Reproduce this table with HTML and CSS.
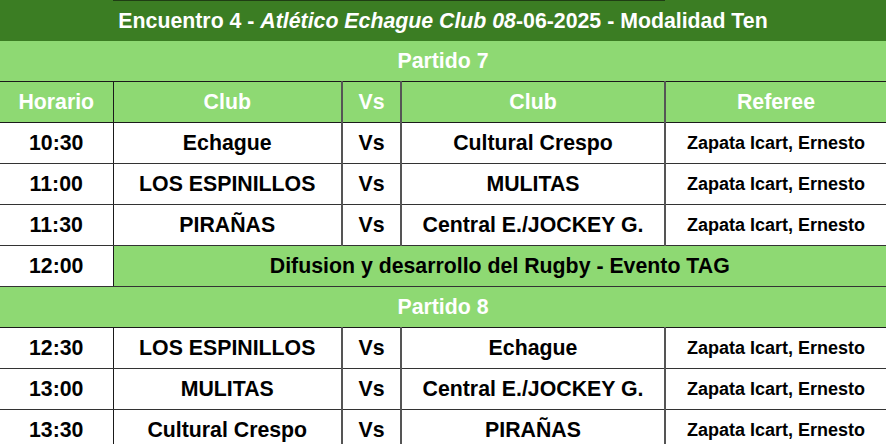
FILE: index.html
```html
<!DOCTYPE html>
<html lang="es">
<head>
<meta charset="utf-8">
<title>Encuentro 4 - Modalidad Ten</title>
<link rel="stylesheet" href="styles.css">
</head>
<body>
<table class="fixture">
  <colgroup>
    <col class="c-time">
    <col class="c-club1">
    <col class="c-vs">
    <col class="c-club2">
    <col class="c-ref">
  </colgroup>
  <tbody>
    <tr class="cut">
      <td class="cut-side"></td>
      <td class="cut-mid" colspan="3"></td>
      <td class="cut-side"></td>
    </tr>
    <tr class="title">
      <td colspan="5">Encuentro 4 - <i>Atlético Echague Club 08</i>-06-2025 - Modalidad Ten</td>
    </tr>
    <tr class="match">
      <td colspan="5">Partido 7</td>
    </tr>
    <tr class="head">
      <td>Horario</td>
      <td>Club</td>
      <td class="vs">Vs</td>
      <td>Club</td>
      <td class="ref">Referee</td>
    </tr>
    <tr class="game">
      <td>10:30</td>
      <td>Echague</td>
      <td class="vs">Vs</td>
      <td>Cultural Crespo</td>
      <td class="ref">Zapata Icart, Ernesto</td>
    </tr>
    <tr class="game">
      <td>11:00</td>
      <td>LOS ESPINILLOS</td>
      <td class="vs">Vs</td>
      <td>MULITAS</td>
      <td class="ref">Zapata Icart, Ernesto</td>
    </tr>
    <tr class="game">
      <td>11:30</td>
      <td>PIRAÑAS</td>
      <td class="vs">Vs</td>
      <td>Central E./JOCKEY G.</td>
      <td class="ref">Zapata Icart, Ernesto</td>
    </tr>
    <tr class="game event">
      <td>12:00</td>
      <td class="event-cell" colspan="4">Difusion y desarrollo del Rugby - Evento TAG</td>
    </tr>
    <tr class="match">
      <td colspan="5">Partido 8</td>
    </tr>
    <tr class="game">
      <td>12:30</td>
      <td>LOS ESPINILLOS</td>
      <td class="vs">Vs</td>
      <td>Echague</td>
      <td class="ref">Zapata Icart, Ernesto</td>
    </tr>
    <tr class="game">
      <td>13:00</td>
      <td>MULITAS</td>
      <td class="vs">Vs</td>
      <td>Central E./JOCKEY G.</td>
      <td class="ref">Zapata Icart, Ernesto</td>
    </tr>
    <tr class="game">
      <td>13:30</td>
      <td>Cultural Crespo</td>
      <td class="vs">Vs</td>
      <td>PIRAÑAS</td>
      <td class="ref">Zapata Icart, Ernesto</td>
    </tr>
  </tbody>
</table>
</body>
</html>
```

FILE: styles.css
```css
html, body {
  margin: 0;
  padding: 0;
  background: #ffffff;
  overflow: hidden;
}

.fixture {
  width: 886px;
  border-collapse: collapse;
  table-layout: fixed;
  font-family: "Liberation Sans", Arial, sans-serif;
  font-weight: bold;
  color: #000;
}

.c-time { width: 113px; }
.c-club1 { width: 229px; }
.c-vs { width: 59px; }
.c-club2 { width: 264px; }
.c-ref { width: 221px; }

.fixture td {
  padding: 0;
  text-align: center;
  white-space: nowrap;
  overflow: hidden;
}

.cut td {
  height: 1px;
  line-height: 1px;
  font-size: 1px;
}
.cut-side { background: #3b7d23; }
.cut-mid { background: #1f3d14; }

.title td {
  height: 40px;
  background: #3b7d23;
  color: #ffffff;
  font-size: 21.3px;
}
.title i { font-style: italic; }

.match td {
  height: 40px;
  background: #8ed973;
  color: #ffffff;
  font-size: 21.3px;
  border-bottom: 1px solid #1a1a1a;
}

.head td {
  height: 40px;
  background: #8ed973;
  color: #ffffff;
  font-size: 21.3px;
  border-bottom: 1px solid #1a1a1a;
  border-left: 1px solid #1a1a1a;
}

.game td {
  height: 40px;
  font-size: 21.3px;
  border-bottom: 1px solid #333;
  border-left: 1px solid #1a1a1a;
}

.head td:first-child,
.game td:first-child {
  border-left: none;
}

.head td.vs,
.game td.vs,
.head td.vs + td,
.game td.vs + td {
  border-left: 2px solid #555;
}

.head td.ref,
.game td.ref {
  border-left: 2px solid #555;
}

.game td.ref {
  font-size: 18px;
}

.event .event-cell {
  background: #8ed973;
  color: #000;
}
```
